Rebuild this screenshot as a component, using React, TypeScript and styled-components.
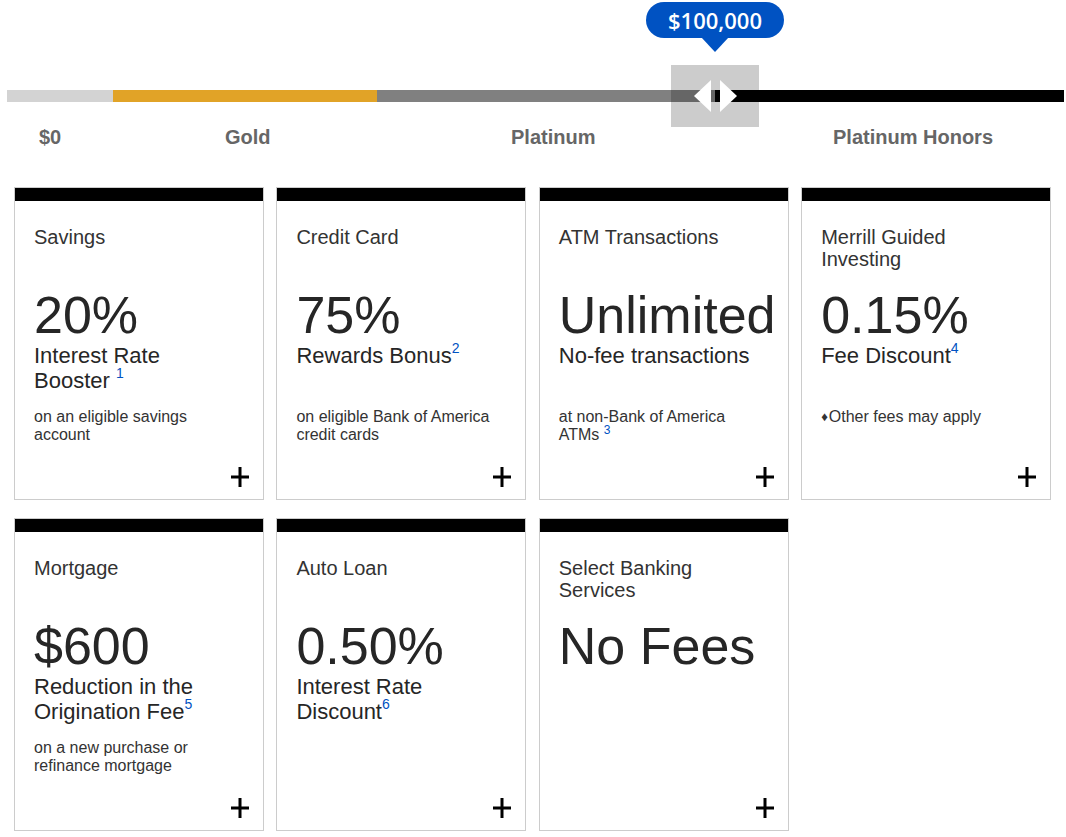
import React from 'react';
import styled, { createGlobalStyle } from 'styled-components';

const GlobalStyle = createGlobalStyle`
  html, body {
    margin: 0;
    padding: 0;
    background: #ffffff;
  }
  body {
    font-family: "Liberation Sans", Arial, sans-serif;
    color: #333333;
  }
  * {
    box-sizing: border-box;
  }
`;

const Page = styled.div`
  width: 1066px;
  padding-bottom: 6px;
`;

const Slider = styled.div`
  position: relative;
  padding: 90px 2px 0 7px;
`;

const Track = styled.div`
  display: flex;
  height: 12px;
`;

const Segment = styled.div<{ $color: string; $width?: number }>`
  background: ${p => p.$color};
  ${p => (p.$width ? `width: ${p.$width}px;` : 'flex: 1;')}
`;

const Handle = styled.div`
  position: absolute;
  left: 671px;
  top: 65px;
  width: 88px;
  height: 62px;
  background: rgba(0, 0, 0, 0.2);
  display: flex;
  align-items: center;
  justify-content: center;
  gap: 9px;
`;

const Arrow = styled.span<{ $dir: 'left' | 'right' }>`
  width: 0;
  height: 0;
  border-top: 16px solid transparent;
  border-bottom: 16px solid transparent;
  ${p =>
    p.$dir === 'left'
      ? 'border-right: 17px solid #ffffff;'
      : 'border-left: 17px solid #ffffff;'}
`;

const Tooltip = styled.div`
  position: absolute;
  left: 646px;
  top: 2px;
  width: 138px;
  height: 36px;
  border-radius: 18px;
  background: #0052c2;
  color: #ffffff;
  font-family: "Open Sans", "Noto Sans", sans-serif;
  font-weight: 600;
  font-size: 22px;
  display: flex;
  align-items: center;
  justify-content: center;

  &::after {
    content: '';
    position: absolute;
    left: 50%;
    top: 35px;
    margin-left: -14px;
    border-left: 14px solid transparent;
    border-right: 14px solid transparent;
    border-top: 15px solid #0052c2;
  }
`;

const Labels = styled.div`
  display: grid;
  grid-template-columns: 186px 286px 322px 1fr;
  padding-left: 39px;
  margin-top: 24px;
`;

const Label = styled.div`
  font-weight: 700;
  font-size: 20px;
  line-height: 23px;
  color: #666666;
`;

const CardGrid = styled.div`
  display: grid;
  grid-template-columns: repeat(4, 250px);
  column-gap: 12.4px;
  row-gap: 18px;
  padding-left: 14px;
  margin-top: 38px;
`;

const Card = styled.div`
  height: 313px;
  border: 1px solid #cccccc;
  background: #ffffff;
  display: flex;
  flex-direction: column;
`;

const TopBar = styled.div`
  height: 13px;
  background: #000000;
`;

const Content = styled.div`
  padding: 25px 29px 0 19px;
`;

const CardTitle = styled.div`
  font-size: 20px;
  line-height: 22px;
  height: 44px;
  color: #333333;
`;

const Figure = styled.div`
  margin-top: 19px;
  font-size: 52px;
  line-height: 52px;
  color: #262626;
  white-space: nowrap;
`;

const FigureLabel = styled.div`
  margin-top: 2px;
  font-size: 22px;
  line-height: 25px;
  height: 50px;
  color: #262626;
`;

const Note = styled.div`
  margin-top: 15px;
  font-size: 16px;
  line-height: 18px;
  color: #333333;
`;

const Sup = styled.span<{ $small?: boolean }>`
  position: relative;
  top: ${p => (p.$small ? '-6px' : '-10px')};
  font-size: ${p => (p.$small ? '12px' : '14px')};
  line-height: 0;
  color: #0052c2;
`;

const Diamond = styled.span`
  font-size: 13px;
  position: relative;
  top: -1px;
  margin-right: 1px;
`;

const PlusButton = styled.div`
  margin-top: auto;
  align-self: flex-end;
  margin-right: 14px;
  margin-bottom: 12px;
  width: 18px;
  height: 20px;
  display: flex;
`;

const PlusIcon = () => (
  <svg width="18" height="20" viewBox="0 0 18 20">
    <rect x="0" y="8.5" width="18" height="3" fill="#000" />
    <rect x="7.5" y="0" width="3" height="20" fill="#000" />
  </svg>
);

type Benefit = {
  title: string;
  figure: string;
  label: React.ReactNode;
  note?: React.ReactNode;
};

const benefits: Benefit[] = [
  {
    title: 'Savings',
    figure: '20%',
    label: (
      <>
        Interest Rate Booster <Sup>1</Sup>
      </>
    ),
    note: 'on an eligible savings account',
  },
  {
    title: 'Credit Card',
    figure: '75%',
    label: (
      <>
        Rewards Bonus<Sup>2</Sup>
      </>
    ),
    note: 'on eligible Bank of America credit cards',
  },
  {
    title: 'ATM Transactions',
    figure: 'Unlimited',
    label: 'No-fee transactions',
    note: (
      <>
        at non-Bank of America ATMs <Sup $small>3</Sup>
      </>
    ),
  },
  {
    title: 'Merrill Guided Investing',
    figure: '0.15%',
    label: (
      <>
        Fee Discount<Sup>4</Sup>
      </>
    ),
    note: (
      <>
        <Diamond>♦</Diamond>Other fees may apply
      </>
    ),
  },
  {
    title: 'Mortgage',
    figure: '$600',
    label: (
      <>
        Reduction in the Origination Fee<Sup>5</Sup>
      </>
    ),
    note: 'on a new purchase or refinance mortgage',
  },
  {
    title: 'Auto Loan',
    figure: '0.50%',
    label: (
      <>
        Interest Rate Discount<Sup>6</Sup>
      </>
    ),
  },
  {
    title: 'Select Banking Services',
    figure: 'No Fees',
    label: '',
  },
];

const tiers = ['$0', 'Gold', 'Platinum', 'Platinum Honors'];

const App: React.FC = () => {
  return (
    <Page>
      <GlobalStyle />
      <Slider>
        <Track>
          <Segment $color="#d3d3d3" $width={106} />
          <Segment $color="#e1a327" $width={264} />
          <Segment $color="#808080" $width={338} />
          <Segment $color="#000000" />
        </Track>
        <Handle>
          <Arrow $dir="left" />
          <Arrow $dir="right" />
        </Handle>
        <Tooltip>$100,000</Tooltip>
      </Slider>

      <Labels>
        {tiers.map(t => (
          <Label key={t}>{t}</Label>
        ))}
      </Labels>

      <CardGrid>
        {benefits.map(b => (
          <Card key={b.title}>
            <TopBar />
            <Content>
              <CardTitle>{b.title}</CardTitle>
              <Figure>{b.figure}</Figure>
              <FigureLabel>{b.label}</FigureLabel>
              {b.note && <Note>{b.note}</Note>}
            </Content>
            <PlusButton>
              <PlusIcon />
            </PlusButton>
          </Card>
        ))}
      </CardGrid>
    </Page>
  );
};

export default App;
